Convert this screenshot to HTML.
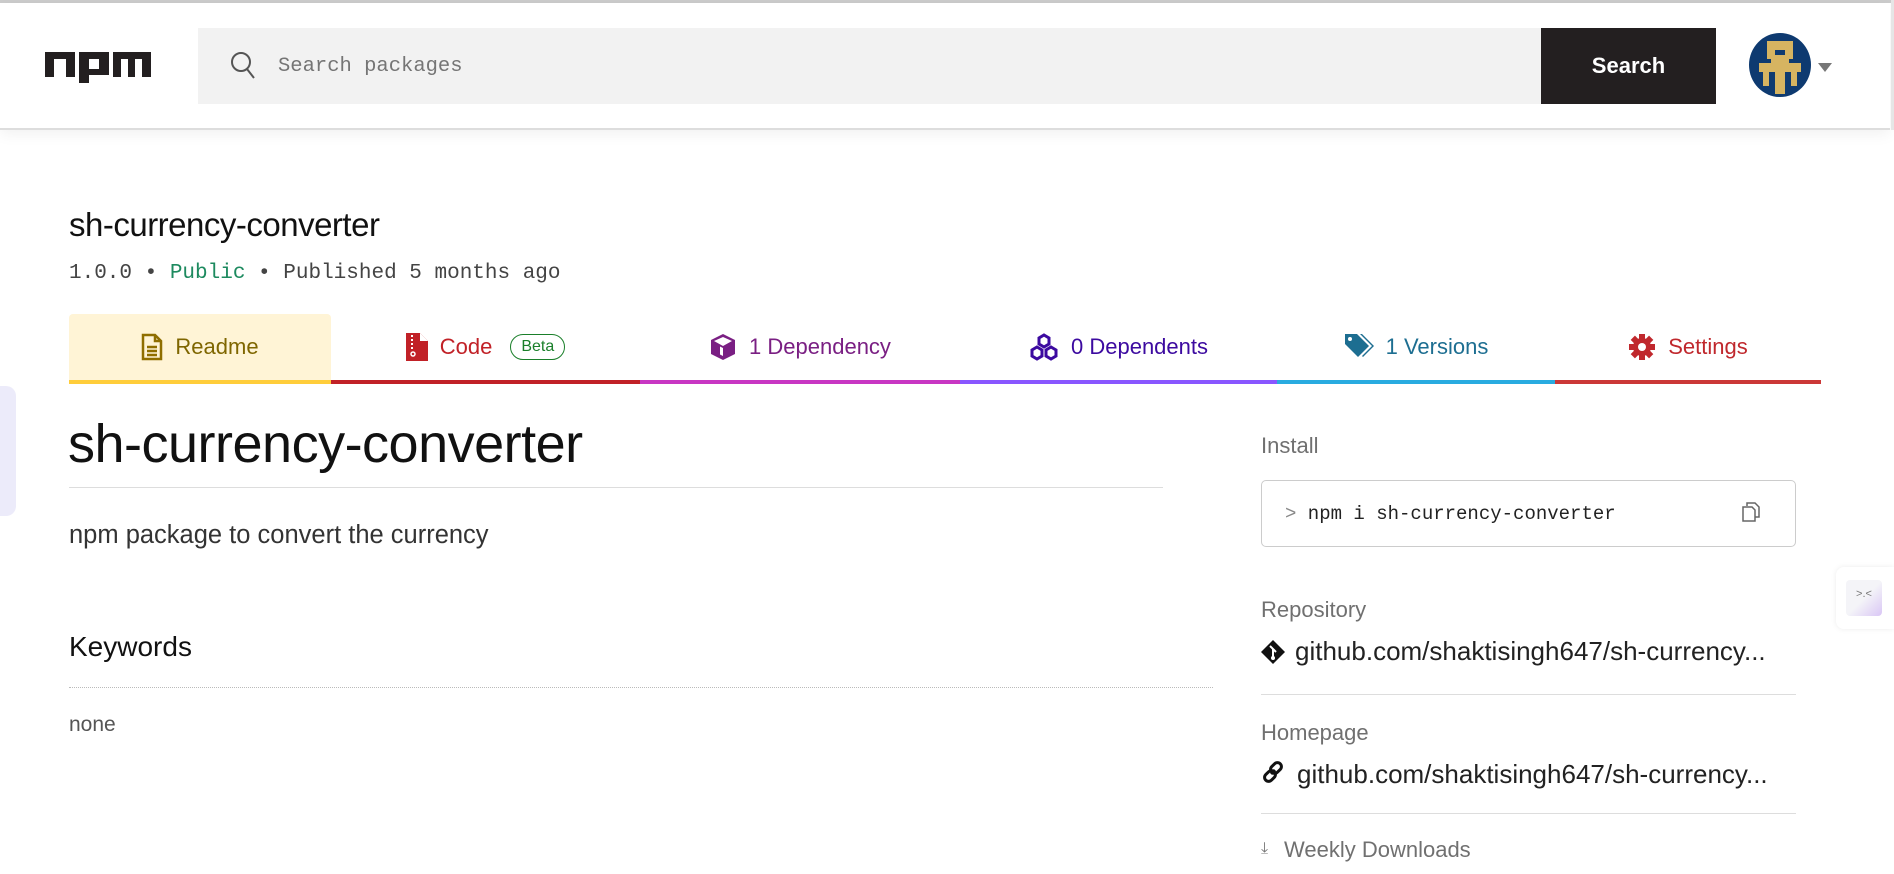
<!DOCTYPE html>
<html><head><meta charset="utf-8"><style>
*{margin:0;padding:0;box-sizing:border-box}
body{width:1894px;height:874px;overflow:hidden;background:#fff;font-family:"Liberation Sans",sans-serif;position:relative;color:#111}
.a{position:absolute;white-space:nowrap}
.mono{font-family:"Liberation Mono",monospace}
.tab{position:absolute;top:314px;height:70px;border-bottom:4px solid;display:flex;align-items:center;justify-content:center;font-size:22px;gap:12px}
.tab svg{flex:none}
</style></head><body>
<div class="a" style="left:0;top:0;width:1894px;height:3px;background:#ccc"></div>
<div class="a" style="left:0;top:3px;width:1890px;height:127px;border-bottom:2px solid #ddd;box-shadow:0 4px 14px rgba(0,0,0,.06);background:#fff"></div>
<div class="a" style="right:0;top:0;width:3px;height:130px;background:#e6e6e6"></div>
<svg class="a" style="left:45px;top:52px" width="106" height="32" viewBox="0 0 106 32"><g fill="#231f20"><path d="M0 0h30v25h-9V7h-12v18H0z"/><path d="M34 0h30v23H44v8H34z"/><path d="M68 0h38v25h-9V7h-7v18h-7V7h-7v18h-8z"/></g><rect x="44" y="7" width="10" height="10" fill="#fff"/></svg>
<div class="a" style="left:198px;top:28px;width:1343px;height:76px;background:#f2f2f2"></div>
<svg class="a" style="left:228px;top:50px" width="32" height="32" viewBox="0 0 32 32"><circle cx="13" cy="12" r="9" fill="none" stroke="#555" stroke-width="2"/><path d="M19 19l7 9" stroke="#555" stroke-width="2"/></svg>
<div class="a mono" style="left:278px;top:55px;font-size:20.5px;color:#757575;line-height:24px">Search packages</div>
<div class="a" style="left:1541px;top:28px;width:175px;height:76px;background:#231f20;color:#fff;font-weight:bold;font-size:22px;display:flex;align-items:center;justify-content:center">Search</div>
<svg class="a" style="left:1748px;top:33px" width="64" height="64" viewBox="0 0 64 64"><ellipse cx="32" cy="32" rx="31" ry="32" fill="#0e3a70"/><path fill="#d6b461" d="M19 8h26v18h-4v4h12v9h-4v14h-6V39h-6v22h-10V39h-6v14h-6V39h-4v-9h12v-4h-4zM27 17v5h10v-5z"/></svg>
<div class="a" style="left:1818px;top:63px;width:0;height:0;border-left:7px solid transparent;border-right:7px solid transparent;border-top:9px solid #777"></div>

<div class="a" style="left:69px;top:206px;font-size:33px;color:#111;letter-spacing:-0.5px">sh-currency-converter</div>
<div class="a mono" style="left:69px;top:262px;font-size:21px;color:#444">1.0.0 • <span style="color:#1d8a5f">Public</span> • Published 5 months ago</div>

<div class="tab" style="left:69px;width:262px;background:#fff4d6;border-color:#ffcd3a;color:#7f6600;border-radius:4px 4px 0 0">
<svg width="22" height="28" viewBox="0 0 22 28"><path d="M2 2h12l6 6v18H2z M14 2v6h6 M6 14h10M6 18h10M6 22h10" fill="none" stroke="#8f6e00" stroke-width="2.5"/></svg>Readme</div>
<div class="tab" style="left:331px;width:309px;border-color:#c12127;color:#c12127">
<svg width="22" height="28" viewBox="0 0 22 28"><path d="M0 0h14l8 8v20H0z" fill="#c12127"/><path d="M14 0v8h8z" fill="#fff"/><path d="M6 2v16" stroke="#fff" stroke-width="2" stroke-dasharray="2 2"/><circle cx="7" cy="21" r="2" fill="none" stroke="#fff" stroke-width="1.5"/></svg>Code<span style="border:1.5px solid #1a7f2a;color:#1a7f2a;border-radius:16px;font-size:16px;padding:3px 10px;margin-left:6px">Beta</span></div>
<div class="tab" style="left:640px;width:320px;border-color:#c836c3;color:#7a1f83">
<svg width="28" height="28" viewBox="0 0 28 28"><path d="M14 1l12 6v14l-12 6-12-6V7z" fill="#7a1f83"/><path d="M14 13L5 8l9-4 9 4z" fill="#fff"/><path d="M14 15v8l-3-1.5v-8z" fill="#fff"/></svg>1 Dependency</div>
<div class="tab" style="left:960px;width:317px;border-color:#8956ff;color:#3c0aa0">
<svg width="30" height="28" viewBox="0 0 30 28"><g fill="none" stroke="#3c0aa0" stroke-width="3"><path d="M15 2l5 3v6l-5 3-5-3V5z"/><path d="M8 14l5 3v6l-5 3-5-3v-6z"/><path d="M22 14l5 3v6l-5 3-5-3v-6z"/></g></svg>0 Dependents</div>
<div class="tab" style="left:1277px;width:278px;border-color:#29abe0;color:#1d6e91">
<svg width="30" height="28" viewBox="0 0 30 28"><path d="M1 1h12l12 12-11 11L1 11z" fill="#1d6e91"/><circle cx="6" cy="6" r="2" fill="#fff"/><path d="M16 1h2l12 12-11 11-1-1 10-10z" fill="#1d6e91"/></svg>1 Versions</div>
<div class="tab" style="left:1555px;width:266px;border-color:#cb3837;color:#c0282d">
<svg width="28" height="28" viewBox="0 0 28 28"><g fill="#c0282d"><circle cx="14" cy="14" r="9"/><rect x="11" y="1" width="6" height="26"/><rect x="1" y="11" width="26" height="6"/><rect x="11" y="1" width="6" height="26" transform="rotate(45 14 14)"/><rect x="11" y="1" width="6" height="26" transform="rotate(-45 14 14)"/></g><circle cx="14" cy="14" r="4" fill="#fff"/></svg>Settings</div>

<div class="a" style="left:0;top:386px;width:16px;height:130px;background:#ecebfa;border-radius:0 10px 10px 0"></div>

<div class="a" style="left:68px;top:409px;font-size:54px;color:#111;letter-spacing:-0.5px;line-height:70px">sh-currency-converter</div>
<div class="a" style="left:69px;top:487px;width:1094px;height:1px;background:#ddd"></div>
<div class="a" style="left:69px;top:521px;font-size:25.5px;color:#333">npm package to convert the currency</div>
<div class="a" style="left:69px;top:631px;font-size:28px;color:#111">Keywords</div>
<div class="a" style="left:69px;top:687px;width:1144px;height:0;border-top:1px dotted #bbb"></div>
<div class="a" style="left:69px;top:713px;font-size:21px;color:#555">none</div>

<div class="a" style="left:1261px;top:433px;font-size:22px;color:#707070">Install</div>
<div class="a" style="left:1261px;top:480px;width:535px;height:67px;border:1px solid #ccc;border-radius:5px"></div>
<div class="a mono" style="left:1285px;top:503px;font-size:19px;color:#222"><span style="color:#888">&gt;</span> npm i sh-currency-converter</div>
<svg class="a" style="left:1742px;top:502px" width="18" height="20" viewBox="0 0 18 20"><path d="M5 4V1h8l4 4v10h-4M1 5h9l3 3v11H1z" fill="none" stroke="#666" stroke-width="1.5"/></svg>
<div class="a" style="left:1261px;top:597px;font-size:22px;color:#707070">Repository</div>
<svg class="a" style="left:1261px;top:640px" width="24" height="24" viewBox="0 0 24 24"><path d="M12 0l12 12-12 12L0 12z" fill="#111"/><path d="M9 6l6 6M12 9v9" stroke="#fff" stroke-width="2"/><circle cx="12" cy="18" r="2" fill="#fff"/></svg>
<div class="a" style="left:1295px;top:636px;font-size:26px;color:#222">github.com/shaktisingh647/sh-currency...</div>
<div class="a" style="left:1261px;top:694px;width:535px;height:1px;background:#ddd"></div>
<div class="a" style="left:1261px;top:720px;font-size:22px;color:#707070">Homepage</div>
<svg class="a" style="left:1261px;top:760px" width="24" height="24" viewBox="0 0 24 24"><g fill="none" stroke="#111" stroke-width="3"><path d="M10 14l4-4"/><rect x="11" y="2" width="8" height="12" rx="4" transform="rotate(45 15 8)"/><rect x="5" y="10" width="8" height="12" rx="4" transform="rotate(45 9 16)"/></g></svg>
<div class="a" style="left:1297px;top:759px;font-size:26px;color:#222">github.com/shaktisingh647/sh-currency...</div>
<div class="a" style="left:1261px;top:813px;width:535px;height:1px;background:#ddd"></div>
<div class="a" style="left:1261px;top:840px;font-size:16px;color:#777">⤓</div>
<div class="a" style="left:1284px;top:837px;font-size:22px;color:#707070">Weekly Downloads</div>

<div class="a" style="left:1836px;top:567px;width:58px;height:62px;background:#fff;border-radius:8px 0 0 8px;box-shadow:0 0 6px rgba(0,0,0,.08)"></div>
<div class="a" style="left:1846px;top:580px;width:36px;height:36px;border-radius:4px;background:linear-gradient(135deg,#f4f4f8 50%,#d9c6f5);font-size:11px;color:#777;text-align:center;line-height:28px">&gt;.&lt;</div>
</body></html>
